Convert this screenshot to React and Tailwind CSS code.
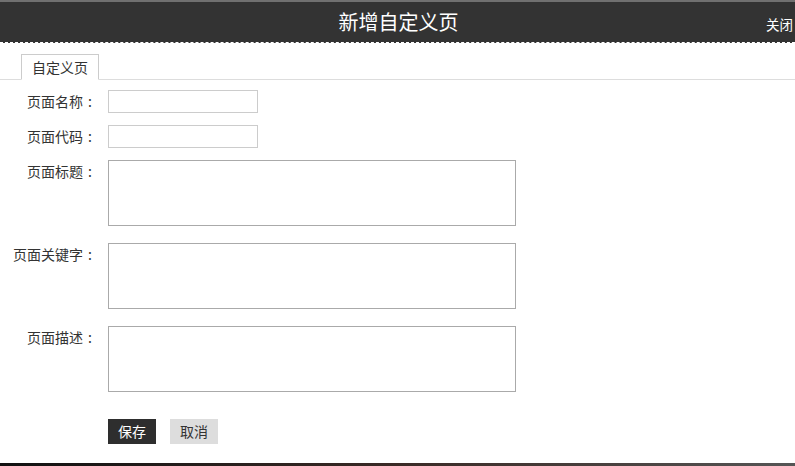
import React from "react";

const font = { fontFamily: '"Microsoft YaHei", "Noto Sans CJK SC", "Noto Sans", sans-serif' };

function Label({ text, className }) {
  return (
    <div className={"w-[97px] flex justify-end text-[14px] text-[#333] whitespace-nowrap " + className}>
      <span>{text}</span>
      <span className="inline-block w-[14px] text-center">:</span>
    </div>
  );
}

function InputRow({ label }) {
  return (
    <div className="flex items-center h-[23px]">
      <Label text={label} className="leading-[23px]" />
      <input className="ml-[11px] w-[150px] h-[23px] border border-[#ccc] outline-none px-1 text-[13px]" />
    </div>
  );
}

function AreaRow({ label }) {
  return (
    <div className="flex items-start h-[66px]">
      <Label text={label} className="leading-[20px] pt-[1px]" />
      <textarea className="ml-[11px] w-[408px] h-[66px] border border-[#aaa] outline-none resize-none p-1 text-[13px] block" />
    </div>
  );
}

export default function App() {
  return (
    <div className="w-[795px] h-[466px] flex flex-col bg-white overflow-hidden" style={font}>
      <div className="h-[2px] bg-[#707070] shrink-0" />
      <div className="h-[41px] shrink-0 bg-[#333] border-b border-dashed border-white flex items-center relative">
        <div className="flex-1 text-center text-white text-[20px] leading-[28px] pl-[2px]">新增自定义页</div>
        <div className="absolute right-[2px] top-[13px] text-white text-[13.5px] leading-[18px]">关闭</div>
      </div>
      <div className="flex-1 flex flex-col">
        <div className="mt-[11px] border-b border-[#ddd] flex pl-[21px]">
          <div className="-mb-px w-[78px] h-[26px] border border-[#ccc] border-b-white bg-white text-[14px] text-[#333] flex items-center justify-center">
            自定义页
          </div>
        </div>
        <div className="flex flex-col mt-[10px]">
          <InputRow label="页面名称" />
          <div className="h-[12px]" />
          <InputRow label="页面代码" />
          <div className="h-[12px]" />
          <AreaRow label="页面标题" />
          <div className="h-[17px]" />
          <AreaRow label="页面关键字" />
          <div className="h-[17px]" />
          <AreaRow label="页面描述" />
          <div className="h-[27px]" />
          <div className="flex pl-[108px] gap-[14px]">
            <button className="w-[48px] h-[25px] bg-[#2e2e2e] text-white text-[14px] leading-[25px]">保存</button>
            <button className="w-[48px] h-[25px] bg-[#ddd] text-[#333] text-[14px] leading-[25px]">取消</button>
          </div>
        </div>
      </div>
      <div className="h-[3px] shrink-0 bg-gradient-to-r from-[#111] via-[#3a2a26] to-[#555]" />
    </div>
  );
}
